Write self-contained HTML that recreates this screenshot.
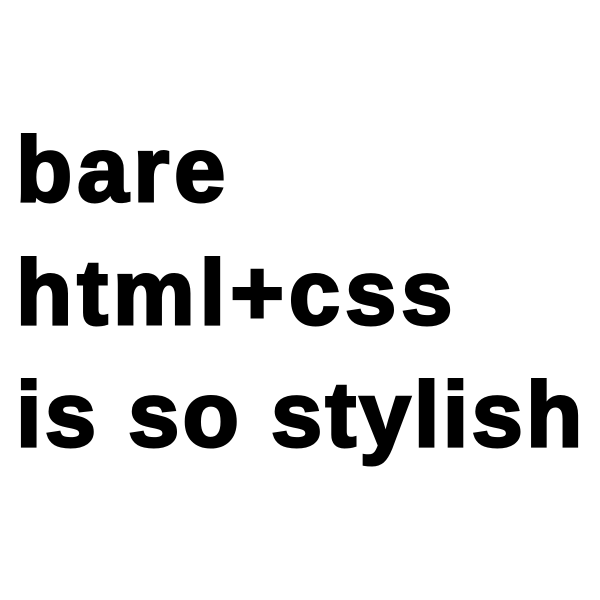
<!DOCTYPE html>
<html><head><style>
html,body{margin:0;padding:0;background:#fff;width:600px;height:600px;overflow:hidden}
.t{position:absolute;left:16px;font-family:"Liberation Sans",Arial,sans-serif;font-weight:bold;font-size:92px;letter-spacing:5px;color:#000;-webkit-text-stroke:3px #000;line-height:1;white-space:nowrap}
</style></head><body>
<div class="t" style="top:124px">bare</div>
<div class="t" style="top:247px">html+css</div>
<div class="t" style="top:369px;letter-spacing:3.3px">is so stylish</div>
</body></html>
